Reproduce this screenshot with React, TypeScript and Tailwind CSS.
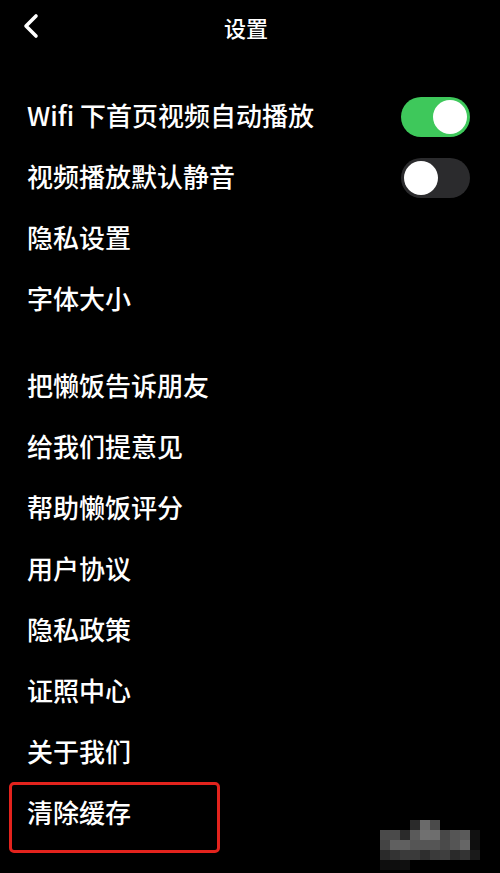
const groupA = ["隐私设置", "字体大小"];
const groupB = ["把懒饭告诉朋友", "给我们提意见", "帮助懒饭评分", "用户协议", "隐私政策", "证照中心", "关于我们"];

// pixelated watermark blocks, 10px cells
const blur: string[][] = [
  ["#000", "#000", "#000", "#2a2a2a", "#6a6a6a", "#4a4a4a", "#000", "#000", "#000", "#000"],
  ["#4a4a4a", "#4a4a4a", "#2a2a2a", "#5a5a5a", "#707070", "#6e6e6e", "#484848", "#555", "#5a5a5a", "#111"],
  ["#444", "#606060", "#606060", "#555", "#555", "#555", "#4a4a4a", "#555", "#666", "#0e0e0e"],
  ["#2a2a2a", "#333", "#3a3a3a", "#3a3a3a", "#2e2e2e", "#3a3a3a", "#3e3e3e", "#2a2a2a", "#333", "#1a1a1a"],
  ["#0e0e0e", "#0e0e0e", "#101010", "#000", "#000", "#000", "#000", "#000", "#000", "#000"],
];

const Toggle = ({ on }: { on: boolean }) => (
  <div
    className={`w-[69px] h-[40px] rounded-full p-[3px] flex ${on ? "bg-[#3ec85b] justify-end" : "bg-[#2b2b2d] justify-start"}`}
  >
    <div className="w-[34px] h-[34px] rounded-full bg-white" />
  </div>
);

const Row = ({ label, toggle }: { label: string; toggle?: boolean }) => (
  <div className="h-[61px] flex items-center justify-between pl-[27px] pr-[30px]">
    <span className="text-[26px] font-medium text-white leading-none -mt-[4px]">{label}</span>
    {toggle !== undefined && <Toggle on={toggle} />}
  </div>
);

export default function App() {
  return (
    <div
      className="relative w-[500px] h-[873px] bg-black overflow-hidden"
      style={{ fontFamily: '"Noto Sans CJK SC", "Noto Sans", sans-serif' }}
    >
      {/* Header */}
      <div className="relative h-[56px] flex items-center justify-center pr-[8px]">
        <svg className="absolute left-[22px] top-[13px]" width="18" height="26" viewBox="0 0 18 26">
          <polyline points="14,3 4,13 14,23" fill="none" stroke="white" strokeWidth="3.6" strokeLinecap="round" strokeLinejoin="round" />
        </svg>
        <span className="text-[22px] font-medium text-white leading-none -mt-[2px]">设置</span>
      </div>

      <div className="pt-[30px]">
        <Row label="Wifi 下首页视频自动播放" toggle={true} />
        <Row label="视频播放默认静音" toggle={false} />
        {groupA.map((l) => (
          <Row key={l} label={l} />
        ))}
      </div>

      <div className="pt-[26px]">
        {groupB.map((l) => (
          <Row key={l} label={l} />
        ))}
        <Row label="清除缓存" />
      </div>

      {/* red highlight box */}
      <div className="absolute left-[9px] top-[782px] w-[211px] h-[71px] border-[3px] border-[#e3231d] rounded-[5px]" />

      {/* blurred watermark */}
      <svg className="absolute left-[380px] top-[820px]" width="100" height="50" viewBox="0 0 100 50">
        {blur.map((row, r) =>
          row.map((c, i) => <rect key={`${r}-${i}`} x={i * 10} y={r * 10} width="10" height="10" fill={c} />)
        )}
      </svg>
    </div>
  );
}
